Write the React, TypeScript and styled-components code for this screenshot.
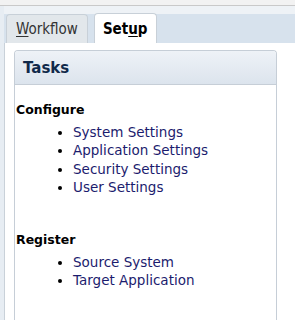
import styled, { createGlobalStyle } from "styled-components";

const GlobalStyle = createGlobalStyle`
  html, body {
    margin: 0;
    padding: 0;
    background: #ffffff;
  }
  body {
    font-family: "DejaVu Sans", Verdana, sans-serif;
  }
`;

const Page = styled.div`
  width: 295px;
  height: 320px;
  display: flex;
  flex-direction: column;
  overflow: hidden;
`;

const TopStrip = styled.div`
  height: 5px;
  background: #f2f2f2;
  border-bottom: 1px solid #c9c9c9;
`;

const TabArea = styled.div`
  display: flex;
  align-items: flex-end;
  padding: 7px 0 0 2px;
  background: linear-gradient(#eef2f6 0, #eef2f6 8px, #d7e2ed 8px);
  border-left: 4px solid #e7edf3;
`;

const Tab = styled.div<{ $active?: boolean }>`
  height: ${(p) => (p.$active ? 30 : 29)}px;
  box-sizing: border-box;
  display: flex;
  align-items: center;
  padding: 0 ${(p) => (p.$active ? 8 : 9)}px;
  margin-right: 6px;
  border: 1px solid #c8d0d8;
  border-bottom: none;
  border-radius: 4px 4px 0 0;
  background: ${(p) => (p.$active ? "#ffffff" : "#e2e7eb")};
  color: ${(p) => (p.$active ? "#000000" : "#333333")};
  font-family: "DejaVu Sans Condensed", "DejaVu Sans", sans-serif;
  font-stretch: condensed;
  font-size: 15px;
  font-weight: ${(p) => (p.$active ? "bold" : "normal")};
  u {
    text-decoration: underline;
    text-underline-offset: 2px;
  }
`;

const Content = styled.div`
  flex: 1;
  display: flex;
  border-left: 4px solid #e7edf3;
`;

const ContentInner = styled.div`
  flex: 1;
  background: #ffffff;
  border-left: 1px solid #c9d1d9;
  padding: 7px 18px 0 9px;
  display: flex;
`;

const Panel = styled.div`
  flex: 1;
  display: flex;
  flex-direction: column;
  border: 1px solid #c6ced7;
  border-bottom: none;
  border-radius: 4px 4px 0 0;
`;

const PanelHeader = styled.div`
  height: 33px;
  display: flex;
  align-items: center;
  padding-left: 8px;
  border-bottom: 1px solid #c6ced7;
  border-radius: 3px 3px 0 0;
  background: linear-gradient(#eef2f7, #dce4ed);
  color: #10294a;
  font-size: 15px;
  font-weight: bold;
`;

const PanelBody = styled.div`
  padding: 17px 0 0 1px;
`;

const Section = styled.div<{ $gap?: number }>`
  margin-top: ${(p) => p.$gap ?? 0}px;
`;

const SectionTitle = styled.div`
  font-size: 12.5px;
  font-weight: bold;
  color: #000000;
  line-height: 16px;
  margin-bottom: 5px;
`;

const List = styled.ul`
  margin: 0;
  padding: 0 0 0 57px;
  list-style: disc;
`;

const Item = styled.li`
  font-size: 13.5px;
  line-height: 18.3px;
  color: #1c1c6e;
  &::marker {
    color: #000000;
  }
`;

export default function App() {
  return (
    <Page>
      <GlobalStyle />
      <TopStrip />
      <TabArea>
        <Tab>
          <span>
            <u>W</u>orkflow
          </span>
        </Tab>
        <Tab $active>
          <span>
            Set<u>u</u>p
          </span>
        </Tab>
      </TabArea>
      <Content>
        <ContentInner>
          <Panel>
            <PanelHeader>Tasks</PanelHeader>
            <PanelBody>
              <Section>
                <SectionTitle>Configure</SectionTitle>
                <List>
                  <Item>System Settings</Item>
                  <Item>Application Settings</Item>
                  <Item>Security Settings</Item>
                  <Item>User Settings</Item>
                </List>
              </Section>
              <Section $gap={36}>
                <SectionTitle>Register</SectionTitle>
                <List>
                  <Item>Source System</Item>
                  <Item>Target Application</Item>
                </List>
              </Section>
            </PanelBody>
          </Panel>
        </ContentInner>
      </Content>
    </Page>
  );
}
